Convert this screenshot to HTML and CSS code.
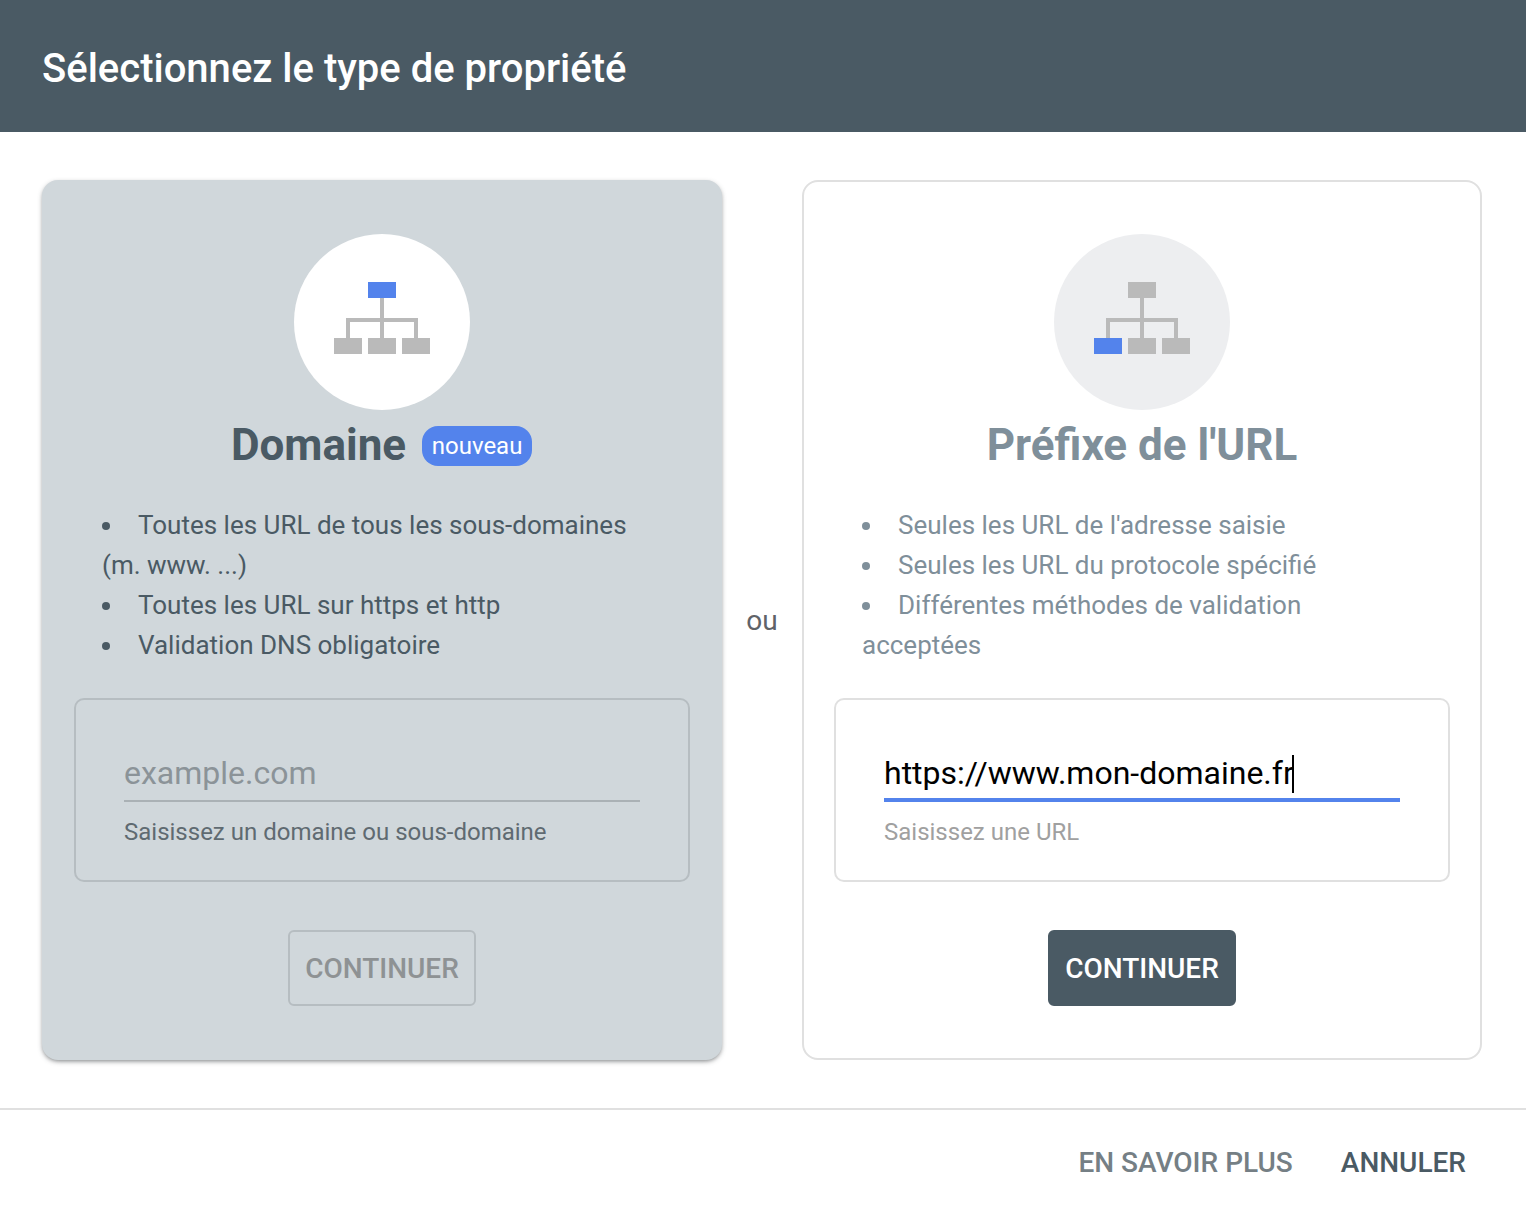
FILE: index.html
```html
<!DOCTYPE html>
<html lang="fr">
<head>
	<meta charset="utf-8">
	<title>Sélectionnez le type de propriété</title>
	<link rel="stylesheet" href="styles.css">
</head>
<body>
<div class="header">Sélectionnez le type de propriété</div>

<div class="content">
	<div class="card card-domain">
		<div class="circle">
			<svg class="tree" width="96" height="72" viewBox="0 0 96 72">
				<path class="link" d="M46 16h4v20h34v20h-4V40H50v16h-4V40H16v16h-4V36h34z"/>
				<rect class="on" x="34" y="0" width="28" height="16"/>
				<rect class="off" x="0" y="56" width="28" height="16"/>
				<rect class="off" x="34" y="56" width="28" height="16"/>
				<rect class="off" x="68" y="56" width="28" height="16"/>
			</svg>
		</div>
		<div class="title">
			<span>Domaine</span>
			<span class="badge">nouveau</span>
		</div>
		<ul class="points">
			<li>Toutes les URL de tous les sous-domaines (m. www. ...)</li>
			<li>Toutes les URL sur https et http</li>
			<li>Validation DNS obligatoire</li>
		</ul>
		<div class="box">
			<div class="field"><span class="placeholder">example.com</span></div>
			<div class="hint">Saisissez un domaine ou sous-domaine</div>
		</div>
		<div class="btn btn-off">CONTINUER</div>
	</div>

	<div class="or">ou</div>

	<div class="card card-url">
		<div class="circle">
			<svg class="tree" width="96" height="72" viewBox="0 0 96 72">
				<path class="link" d="M46 16h4v20h34v20h-4V40H50v16h-4V40H16v16h-4V36h34z"/>
				<rect class="off" x="34" y="0" width="28" height="16"/>
				<rect class="on" x="0" y="56" width="28" height="16"/>
				<rect class="off" x="34" y="56" width="28" height="16"/>
				<rect class="off" x="68" y="56" width="28" height="16"/>
			</svg>
		</div>
		<div class="title">
			<span>Préfixe de l'URL</span>
		</div>
		<ul class="points">
			<li>Seules les URL de l'adresse saisie</li>
			<li>Seules les URL du protocole spécifié</li>
			<li>Différentes méthodes de validation acceptées</li>
		</ul>
		<div class="box">
			<div class="field field-active"><span class="value">https://www.mon-domaine.fr</span><span class="caret"></span></div>
			<div class="hint">Saisissez une URL</div>
		</div>
		<div class="btn btn-on">CONTINUER</div>
	</div>
</div>

<div class="footer">
	<span class="link-more">EN SAVOIR PLUS</span>
	<span class="link-cancel">ANNULER</span>
</div>
</body>
</html>
```

FILE: styles.css
```css
* {
	box-sizing: border-box;
}

body {
	margin: 0;
	font-family: Roboto, "Liberation Sans", sans-serif;
	background: #fff;
}

.header {
	height: 132px;
	padding-left: 42px;
	line-height: 138px;
	font-size: 40px;
	font-weight: 500;
	color: #fff;
	background: #4a5a64;
}

.content {
	display: flex;
	padding: 48px 44px 48px 42px;
	border-bottom: 2px solid #e0e0e0;
}

.card {
	width: 680px;
	height: 880px;
	padding: 52px 30px 0;
	border-radius: 16px;
	border: 2px solid #e0e0e0;
	display: flex;
	flex-direction: column;
	align-items: center;
}

.card-domain {
	background: #d0d7db;
	border-color: #d0d7db;
	box-shadow: 0 2px 5px -1px rgba(60, 64, 67, 0.7);
	color: #4a5a64;
}

.card-url {
	color: #7f8f9a;
}

.or {
	width: 80px;
	align-self: center;
	text-align: center;
	font-size: 28px;
	color: #5f6368;
}

.circle {
	width: 176px;
	height: 176px;
	border-radius: 50%;
	padding-top: 48px;
	text-align: center;
}

.card-domain .circle {
	background: #fff;
}

.card-url .circle {
	background: #edeef0;
}

.tree {
	display: block;
	margin: 0 auto;
}

.tree .link,
.tree .off {
	fill: #bababa;
}

.tree .on {
	fill: #5383ec;
}

.title {
	height: 70px;
	display: flex;
	align-items: center;
	font-size: 44px;
	font-weight: 700;
}

.badge {
	width: 110px;
	height: 40px;
	margin: 2px 1px 0 16px;
	border-radius: 16px;
	text-align: center;
	line-height: 40px;
	font-size: 24px;
	font-weight: 400;
	color: #fff;
	background: #5383ec;
}

.points {
	align-self: stretch;
	height: 193px;
	margin: 25px 0 0;
	padding: 0 28px;
	list-style-position: inside;
	font-size: 26px;
	line-height: 40px;
}

.points li::marker {
	font-size: 27px;
}

.box {
	align-self: stretch;
	height: 184px;
	padding: 48px 48px 0;
	border: 2px solid #e0e0e0;
	border-radius: 10px;
}

.card-domain .box {
	border-color: #b6bdc1;
}

.field {
	height: 54px;
	line-height: 50px;
	font-size: 32px;
	border-bottom: 2px solid #aab1b5;
}

.field-active {
	border-bottom: 4px solid #5383ec;
	color: #000;
}

.placeholder {
	color: #8b9398;
}

.caret {
	display: inline-block;
	width: 2px;
	height: 38px;
	margin-left: -2px;
	vertical-align: -9px;
	background: #000;
}

.hint {
	margin-top: 16px;
	font-size: 24px;
	line-height: 28px;
	color: #a0a0a0;
}

.card-domain .hint {
	color: #5f6a71;
}

.btn {
	margin-top: 48px;
	width: 188px;
	height: 76px;
	border-radius: 6px;
	text-align: center;
	line-height: 74px;
	font-size: 28px;
	font-weight: 500;
}

.btn-off {
	border: 2px solid #b6bdc1;
	color: #8e9294;
}

.btn-on {
	border: 2px solid #4a5a64;
	background: #4a5a64;
	color: #fff;
}

.footer {
	display: flex;
	justify-content: flex-end;
	gap: 48px;
	padding: 24px 60px 0 0;
	line-height: 58px;
	font-size: 28px;
	font-weight: 500;
}

.link-more {
	color: #757f85;
}

.link-cancel {
	color: #4a5a64;
}
```
